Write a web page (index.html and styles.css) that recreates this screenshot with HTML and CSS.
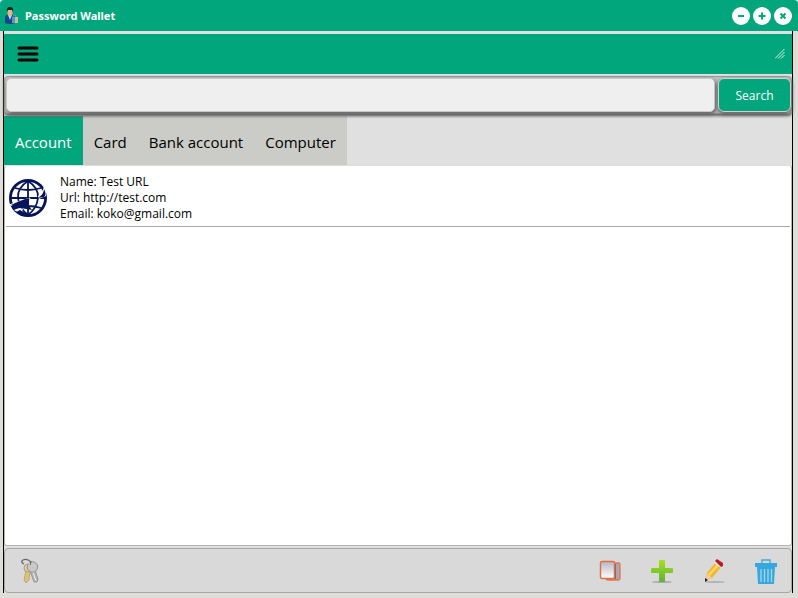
FILE: index.html
```html
<!DOCTYPE html>
<html lang="en">
<head>
  <meta charset="UTF-8">
  <meta name="viewport" content="width=device-width, initial-scale=1.0">
  <title>Password Wallet</title>
  <link rel="stylesheet" href="styles.css">
</head>
<body>
  <div class="window">
    <!-- Title bar -->
    <header class="title-bar">
      <svg class="app-icon" viewBox="0 0 16 18">
        <path d="M1 16V11Q1 8 4 8H8Q11 8 11 11V16Q6 18 1 16Z" fill="#14468a"/>
        <path d="M4 8L6 13L8 8Z" fill="#b9dcea"/>
        <ellipse cx="6" cy="5" rx="2.600" ry="4" fill="#e9b27e"/>
        <path d="M3 5Q2 0 6 0T9 5L8 3H4Z" fill="#17252c"/>
        <path d="M9 11V9Q11 6 12 9V11" fill="none" stroke="#4aa5d6"/>
        <rect x="8" y="10" width="6" height="6" fill="#d5b98c"/>
        <path d="M8 10H11V16H8Z" fill="#4b9bd0"/>
      </svg>
      <h1>Password Wallet</h1>
      <div class="window-buttons">
        <button type="button" aria-label="Minimize">
          <svg viewBox="0 0 18 18"><path d="M6 9H12"/></svg>
        </button>
        <button type="button" aria-label="Maximize">
          <svg viewBox="0 0 18 18"><path d="M5.500 9H12.500M9 5.500V12.500"/></svg>
        </button>
        <button type="button" aria-label="Close">
          <svg viewBox="0 0 18 18"><path d="M6.500 6.500L11.500 11.500M11.500 6.500L6.500 11.500"/></svg>
        </button>
      </div>
    </header>

    <main class="content">
      <!-- Menu bar -->
      <div class="menu-bar">
        <button type="button" class="menu-button" aria-label="Menu">
          <svg viewBox="0 0 22 16"><path d="M2 2H20M2 8H20M2 14H20"/></svg>
        </button>
        <svg class="grip" viewBox="0 0 10 10"><path d="M0 9.500L9.500 0M3 9.500L9.500 3M6 9.500L9.500 6"/></svg>
      </div>

      <!-- Search -->
      <form class="search">
        <input type="text" class="search-box" aria-label="Search text">
        <button type="button" class="search-button">Search</button>
      </form>

      <!-- Tabs -->
      <nav class="tabs">
        <button type="button" class="tab active">Account</button>
        <button type="button" class="tab">Card</button>
        <button type="button" class="tab">Bank account</button>
        <button type="button" class="tab">Computer</button>
      </nav>

      <!-- Entries -->
      <ul class="entries">
        <li class="entry">
          <svg class="globe" viewBox="0 0 38 38">
            <g fill="none" stroke="#06145a" stroke-width="1.800">
              <circle cx="19" cy="19" r="17.600" stroke-width="2.800"/>
              <path d="M19 1V37M1 19H37M6 9Q19 13 32 9M6 29Q19 25 32 29"/>
              <path d="M19 2Q8 9 9 19T19 36M19 2Q30 9 29 19T19 36"/>
            </g>
            <path d="M0 26Q8 23 21 19L20 26L16 30Q9 25 0 26Z" fill="#06145a" stroke="#fff"/>
            <path d="M3 26Q9 22 20 19L20 27L23 31L12 29L5 31Z" fill="#06145a"/>
            <path d="M5 31Q10 28 14 30L12 34Q9 34 5 31Z" fill="#fff"/>
            <path d="M7 33L11 31L18 35L13 37Z" fill="#06145a"/>
            <path d="M30 20L37 17L38 12L35 7Q34 13 29 17Z" fill="#fff"/>
            <path d="M29 19Q35 15 35 10Q38 15 35 18Z" fill="#06145a"/>
          </svg>
          <div class="entry-text">
            <p>Name: Test URL</p>
            <p>Url: http://test.com</p>
            <p>Email: koko@gmail.com</p>
          </div>
        </li>
      </ul>

      <!-- Actions -->
      <footer class="actions">
        <button type="button" class="action" aria-label="Keys">
          <svg viewBox="0 0 26 26">
            <path d="M9 12L7 22L9 25L12 22L13 13Z" fill="#d9c377" stroke="#a8924d" stroke-width=".6"/>
            <path d="M13 13L17 24L20 24L21 21L18 12Z" fill="#b5b5b5" stroke="#777" stroke-width=".6"/>
            <path d="M16 14L19 23" stroke="#eee"/>
            <circle cx="11" cy="10" r="4" fill="#d8cda6" stroke="#aaa073"/>
            <circle cx="15.500" cy="9" r="5.200" fill="#c9c9c9" stroke="#929292"/>
            <circle cx="13" cy="6" r="1.300" fill="#eee"/>
            <path d="M7 6Q3 4 6 2Q10 0 14 4L13 7" fill="none" stroke="#666" stroke-width="1.200"/>
          </svg>
        </button>
        <div class="action-group">
          <button type="button" class="action" aria-label="Copy">
            <svg viewBox="0 0 26 26">
              <defs>
                <linearGradient id="page" x2="0" y2="1"><stop stop-color="#b9b6c5"/><stop offset="1" stop-color="#fff"/></linearGradient>
              </defs>
              <rect x="9" y="5" width="14" height="17" rx="1.500" fill="#aaa6b2" stroke="#df784f" stroke-width="1.300"/>
              <path d="M18.500 6V21" stroke="#726c7b"/>
              <rect x="3.500" y="3.500" width="14" height="17" rx="1.500" fill="url(#page)" stroke="#df6f40" stroke-width="1.400"/>
            </svg>
          </button>
          <button type="button" class="action" aria-label="Add">
            <svg viewBox="0 0 26 26">
              <defs>
                <linearGradient id="plus" x2="0" y2="1"><stop stop-color="#a4e11c"/><stop offset="1" stop-color="#5fb13a"/></linearGradient>
              </defs>
              <ellipse cx="13" cy="24" rx="10" ry="1" fill="#aaa"/>
              <path d="M11 2H15Q16 2 16 3V10H23Q24 10 24 11V14Q24 15 23 15H16V23Q16 24 15 24H11Q10 24 10 23V15H3Q2 15 2 14V11Q2 10 3 10H10V3Q10 2 11 2Z" fill="url(#plus)"/>
            </svg>
          </button>
          <button type="button" class="action" aria-label="Edit">
            <svg viewBox="0 0 26 26">
              <ellipse cx="14" cy="24" rx="10" ry="1" fill="#b2b2b2"/>
              <path d="M4 23L6 15L14 5L20 9L11 20Z" fill="#f2b72c"/>
              <path d="M8 17L17 7" stroke="#ffdb5a" stroke-width="2.500"/>
              <path d="M4 23L6 15L11 20Z" fill="#edcb9c"/>
              <path d="M4 24V20L7 22Z" fill="#222"/>
              <path d="M13 5L15 3L21 8L20 10Z" fill="#e9e9e9"/>
              <path d="M14 3L16 1L22 5V8L20 9Z" fill="#b71d25"/>
            </svg>
          </button>
          <button type="button" class="action" aria-label="Delete">
            <svg viewBox="0 0 26 26">
              <path d="M9 5V2H17V5" fill="none" stroke="#43aada" stroke-width="1.400"/>
              <path d="M2 5H24V9H2ZM4 9H22L21 26H5Z" fill="#35a9df"/>
              <path d="M8 11V24M11.500 11V24M15 11V24M18.500 11V24" stroke="#a6d3e8" stroke-width="1.300"/>
            </svg>
          </button>
        </div>
      </footer>
    </main>
  </div>
</body>
</html>
```

FILE: styles.css
```css
* {
  box-sizing: border-box;
  margin: 0;
  padding: 0;
}

body {
  font-family: "Open Sans", "Noto Sans", sans-serif;
  background-color: #fff;
  color: #000;
}

button {
  border: none;
  font-family: inherit;
  cursor: pointer;
}

svg {
  display: block;
}

.window {
  display: flex;
  flex-direction: column;
  height: 100vh;
  background-color: #dfddd8;
  border-radius: 4px 4px 0 0;
  overflow: hidden;
}

.title-bar {
  display: flex;
  align-items: center;
  height: 31px;
  padding: 0 6px 0 4px;
  background-color: #02a67d;
  color: #fff;
}

.app-icon {
  width: 16px;
  height: 18px;
}

h1 {
  margin-left: 5px;
  font-size: 11px;
  line-height: 16px;
  font-family: "Noto Sans", "Open Sans", sans-serif;
}

.window-buttons {
  display: flex;
  gap: 3px;
  margin-left: auto;
}

.window-buttons button {
  width: 18px;
  height: 18px;
  border-radius: 50%;
  background-color: #fff;
}

.window-buttons svg {
  width: 18px;
  height: 18px;
  stroke: #02a67d;
  stroke-width: 2;
}

.content {
  flex: 1;
  display: flex;
  flex-direction: column;
  min-height: 0;
  margin: 0 5px 5px 3px;
  padding-top: 3px;
  background-color: #e0e0e0;
  border: solid #000;
  border-width: 0 1px;
}

.menu-bar {
  display: flex;
  justify-content: space-between;
  align-items: center;
  height: 40px;
  padding: 0 7px 0 13px;
  background-color: #02a67d;
}

.menu-button {
  background: none;
}

.menu-button svg {
  width: 22px;
  height: 16px;
  stroke: #000;
  stroke-width: 3;
  stroke-linecap: round;
}

.grip {
  width: 10px;
  height: 10px;
  fill: none;
  stroke: #d5f0e8;
}

.search {
  display: flex;
  gap: 3px;
  height: 38px;
  margin: 2px 0;
  padding: 1px 0 1px 1px;
  background-color: #c2c2c2;
  border: 1px solid #999;
  border-radius: 4px;
  box-shadow: 0 2px 3px #666;
  z-index: 1;
}

.search-box {
  flex: 1;
  min-width: 0;
  padding: 0 8px;
  font-family: inherit;
  font-size: 16px;
  background-color: #efefef;
  border: 1px solid #c8c8c8;
  border-radius: 5px;
  box-shadow: 1px 2px 4px #555;
}

.search-button {
  width: 73px;
  font-size: 12px;
  color: #fff;
  background-color: #02a67d;
  border: 1px solid #d0d0d0;
  border-radius: 6px;
  box-shadow: 0 2px 4px #555;
}

.tabs {
  display: flex;
  height: 49px;
}

.tab {
  padding: 2px 11px 0;
  font-size: 15px;
  background-color: #cbccc7;
}

.tab.active {
  color: #fff;
  background-color: #02a67d;
}

.entries {
  flex: 1;
  min-height: 0;
  padding: 0 1px;
  list-style: none;
  background-color: #fff;
  border: 1px solid #b5b5b5;
  border-top-color: #ddd;
  border-radius: 3px;
}

.entry {
  display: flex;
  align-items: center;
  gap: 13px;
  height: 61px;
  padding: 3px 3px 0;
  border-bottom: 1px solid #a8a8a8;
}

.globe {
  width: 38px;
  height: 38px;
}

.entry-text {
  font-size: 12px;
  line-height: 16px;
}

.actions {
  display: flex;
  justify-content: space-between;
  align-items: center;
  height: 45px;
  margin-top: 2px;
  padding: 0 12px;
  background-color: #d9d9d9;
  border: 1px solid #a7a7a7;
  border-radius: 4px;
}

.action-group {
  display: flex;
  gap: 26px;
}

.action {
  background: none;
}

.action svg {
  width: 26px;
  height: 26px;
}
```
